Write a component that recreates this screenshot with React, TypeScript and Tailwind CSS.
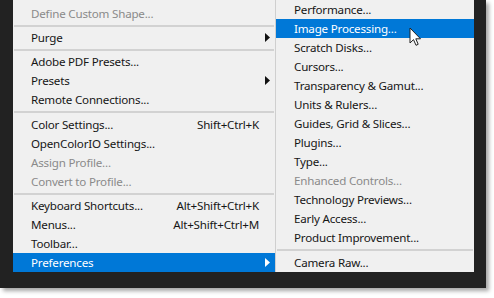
import React from "react";

type Item =
  | { kind: "sep"; h: number }
  | { kind: "spacer"; h: number }
  | {
      kind: "item";
      label: string;
      shortcut?: string;
      arrow?: boolean;
      disabled?: boolean;
      active?: boolean;
    };

const leftItems: Item[] = [
  { kind: "spacer", h: 4 },
  { kind: "item", label: "Define Custom Shape...", disabled: true },
  { kind: "sep", h: 5 },
  { kind: "item", label: "Purge", arrow: true },
  { kind: "sep", h: 5 },
  { kind: "item", label: "Adobe PDF Presets..." },
  { kind: "item", label: "Presets", arrow: true },
  { kind: "item", label: "Remote Connections..." },
  { kind: "sep", h: 6 },
  { kind: "item", label: "Color Settings...", shortcut: "Shift+Ctrl+K" },
  { kind: "item", label: "OpenColorIO Settings..." },
  { kind: "item", label: "Assign Profile...", disabled: true },
  { kind: "item", label: "Convert to Profile...", disabled: true },
  { kind: "sep", h: 5 },
  { kind: "item", label: "Keyboard Shortcuts...", shortcut: "Alt+Shift+Ctrl+K" },
  { kind: "item", label: "Menus...", shortcut: "Alt+Shift+Ctrl+M" },
  { kind: "item", label: "Toolbar..." },
  { kind: "item", label: "Preferences", arrow: true, active: true },
];

const rightItems: Item[] = [
  { kind: "item", label: "Performance..." },
  { kind: "item", label: "Image Processing...", active: true },
  { kind: "item", label: "Scratch Disks..." },
  { kind: "item", label: "Cursors..." },
  { kind: "item", label: "Transparency & Gamut..." },
  { kind: "item", label: "Units & Rulers..." },
  { kind: "item", label: "Guides, Grid & Slices..." },
  { kind: "item", label: "Plugins..." },
  { kind: "item", label: "Type..." },
  { kind: "item", label: "Enhanced Controls...", disabled: true },
  { kind: "item", label: "Technology Previews..." },
  { kind: "item", label: "Early Access..." },
  { kind: "item", label: "Product Improvement..." },
  { kind: "sep", h: 6 },
  { kind: "item", label: "Camera Raw..." },
];

function Arrow({ white }: { white?: boolean }) {
  return (
    <svg width="5" height="9" viewBox="0 0 5 9" className="shrink-0">
      <path d="M0 0 L5 4.5 L0 9 Z" fill={white ? "#ffffff" : "#111111"} />
    </svg>
  );
}

function MenuList({ items }: { items: Item[] }) {
  return (
    <>
      {items.map((it, i) => {
        if (it.kind === "spacer") {
          return <div key={i} style={{ height: it.h }} className="shrink-0" />;
        }
        if (it.kind === "sep") {
          return (
            <div key={i} style={{ height: it.h }} className="flex shrink-0 items-center px-[1px]">
              <div className="h-[2px] w-full bg-[#d2d2d2]" />
            </div>
          );
        }
        const textColor = it.active
          ? "text-white"
          : it.disabled
          ? "text-[#8a8a8a]"
          : "text-[#161616]";
        return (
          <div
            key={i}
            className={`flex h-[19px] shrink-0 items-center pl-[18px] pr-[5px] ${
              it.active ? "bg-[#0078d7]" : ""
            } ${textColor}`}
          >
            <span className="flex-1 whitespace-nowrap leading-[19px]">{it.label}</span>
            {it.shortcut && (
              <span className="mr-[11px] whitespace-nowrap leading-[19px]">{it.shortcut}</span>
            )}
            {it.arrow && (
              <span className="ml-[4px] flex items-center">
                <Arrow white={it.active} />
              </span>
            )}
          </div>
        );
      })}
    </>
  );
}

export default function App() {
  return (
    <div
      className="h-[298px] w-[494px] overflow-hidden bg-white"
      style={{ fontFamily: '"Noto Sans", "Open Sans", Arial, sans-serif' }}
    >
      <div className="relative flex h-[288px] w-[486px] bg-[#222222] shadow-[3px_3px_4px_rgba(0,0,0,0.35)]">
        <div className="ml-[13px] flex h-[272px] w-[262px] flex-col justify-end overflow-hidden bg-[#f0f0f0] text-[11.6px] tracking-[-0.2px]">
          <MenuList items={leftItems} />
        </div>
        <div className="flex h-[272px] w-[199px] flex-col overflow-hidden border-l border-[#cfcfcf] bg-[#f0f0f0] text-[11.6px] tracking-[-0.2px]">
          <MenuList items={rightItems} />
        </div>
        <svg
          className="absolute left-[409px] top-[27px]"
          width="13"
          height="20"
          viewBox="0 0 13 20"
        >
          <path
            d="M1 1 L1 16 L4.5 12.6 L7 18.3 L9.2 17.3 L6.8 11.8 L11.5 11.8 Z"
            fill="#ffffff"
            stroke="#222222"
            strokeWidth="1"
            strokeLinejoin="round"
          />
        </svg>
      </div>
    </div>
  );
}
